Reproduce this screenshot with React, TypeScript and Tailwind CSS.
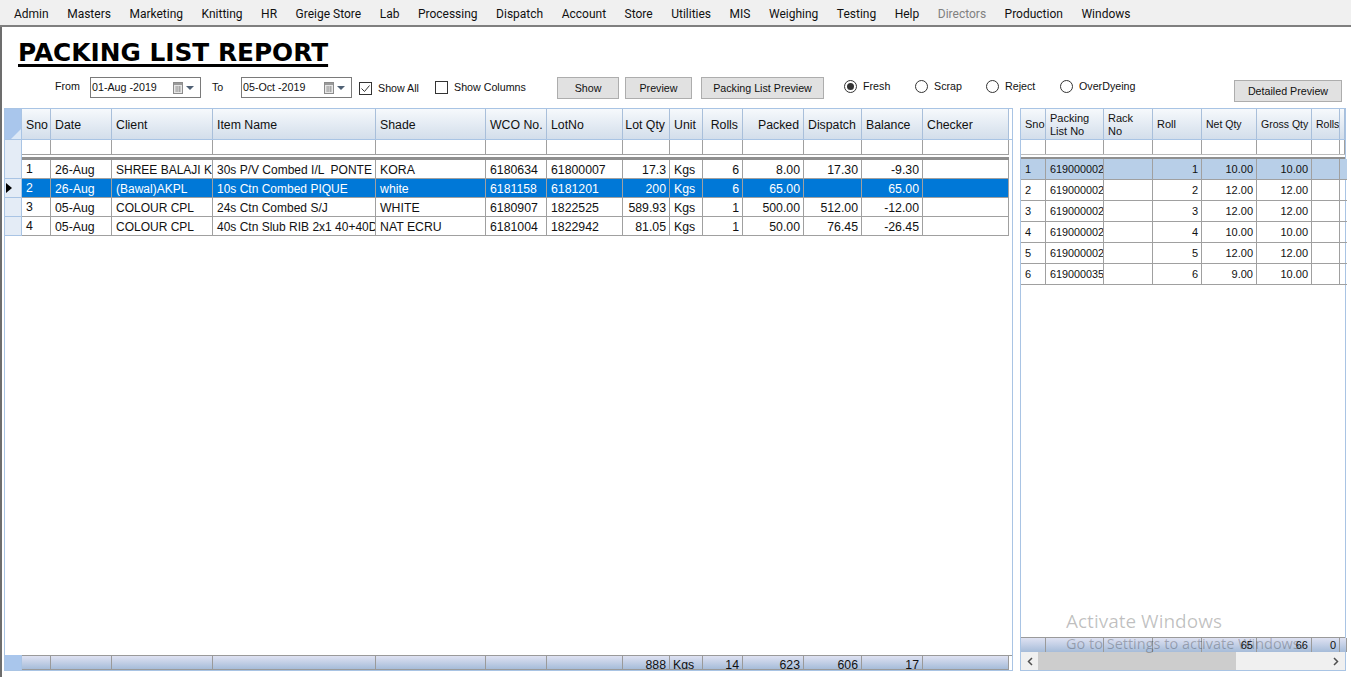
const menu = ["Admin", "Masters", "Marketing", "Knitting", "HR", "Greige Store", "Lab", "Processing", "Dispatch", "Account", "Store", "Utilities", "MIS", "Weighing", "Testing", "Help", "Directors", "Production", "Windows"];

const leftCols = "grid grid-cols-[17px_29px_61px_101px_163px_110px_61px_76px_47px_33px_40px_61px_58px_61px_86px]";
const rightCols = "grid grid-cols-[25px_58px_49px_49px_55px_55px_28px_5px]";

type Col = { label: string; right?: boolean };

const leftHead: Col[] = [
  { label: "Sno" }, { label: "Date" }, { label: "Client" }, { label: "Item Name" }, { label: "Shade" },
  { label: "WCO No." }, { label: "LotNo" }, { label: "Lot Qty", right: true }, { label: "Unit" },
  { label: "Rolls", right: true }, { label: "Packed", right: true }, { label: "Dispatch" }, { label: "Balance" }, { label: "Checker" },
];

const leftRows = [
  ["1", "26-Aug", "SHREE BALAJI KNITS", "30s P/V Combed I/L  PONTE", "KORA", "6180634", "61800007", "17.3", "Kgs", "6", "8.00", "17.30", "-9.30", ""],
  ["2", "26-Aug", "(Bawal)AKPL", "10s Ctn Combed PIQUE", "white", "6181158", "6181201", "200", "Kgs", "6", "65.00", "", "65.00", ""],
  ["3", "05-Aug", "COLOUR CPL", "24s Ctn Combed S/J", "WHITE", "6180907", "1822525", "589.93", "Kgs", "1", "500.00", "512.00", "-12.00", ""],
  ["4", "05-Aug", "COLOUR CPL", "40s Ctn Slub RIB 2x1 40+40D", "NAT ECRU", "6181004", "1822942", "81.05", "Kgs", "1", "50.00", "76.45", "-26.45", ""],
];
const leftRight = [7, 9, 10, 11, 12];

const leftFoot = ["", "", "", "", "", "", "", "888", "Kgs", "14", "623", "606", "17", ""];

const rightRows = [
  ["1", "619000002", "", "1", "10.00", "10.00", "", ""],
  ["2", "619000002", "", "2", "12.00", "12.00", "", ""],
  ["3", "619000002", "", "3", "12.00", "12.00", "", ""],
  ["4", "619000002", "", "4", "10.00", "10.00", "", ""],
  ["5", "619000002", "", "5", "12.00", "12.00", "", ""],
  ["6", "619000035", "", "6", "9.00", "10.00", "", ""],
];
const rightRight = [3, 4, 5];

function CalendarDrop() {
  return (
    <svg width="22" height="12" viewBox="0 0 22 12" className="shrink-0">
      <rect x="0.5" y="0.5" width="9" height="11" fill="#e6e6e6" stroke="#8c8c8c" />
      <rect x="1" y="1" width="8" height="2" fill="#9a9a9a" />
      <path d="M2 5h6M2 7h6M2 9h6M4 4v6M6.5 4v6" stroke="#a8a8a8" strokeWidth="1" />
      <path d="M13 4h8l-4 4z" fill="#4f6074" />
    </svg>
  );
}

function DateBox({ value }: { value: string }) {
  return (
    <div className="h-[21px] w-[111px] shrink-0 border border-[#7a7a7a] flex items-center justify-between pl-[1px] pr-[5px] text-[10.7px] text-[#111]">
      <span className="whitespace-pre">{value}</span>
      <CalendarDrop />
    </div>
  );
}

function Btn({ label, className }: { label: string; className: string }) {
  return (
    <div className={`h-[22px] shrink-0 bg-[#e1e1e1] border border-[#adadad] flex items-center justify-center text-[10.7px] text-[#111] ${className}`}>
      {label}
    </div>
  );
}

function Check({ checked }: { checked?: boolean }) {
  return (
    <svg width="13" height="13" viewBox="0 0 13 13" className="shrink-0">
      <rect x="0.5" y="0.5" width="12" height="12" fill="#fff" stroke="#333" />
      {checked && <path d="M2.5 6.5l3 3 5-6" fill="none" stroke="#333" strokeWidth="1" />}
    </svg>
  );
}

function Radio({ label, on, className }: { label: string; on?: boolean; className: string }) {
  return (
    <div className={`flex items-center shrink-0 h-[13px] mt-[3px] text-[10.7px] text-[#111] whitespace-nowrap ${className}`}>
      <svg width="13" height="13" viewBox="0 0 13 13" className="shrink-0">
        <circle cx="6.5" cy="6.5" r="6" fill="#fff" stroke="#333" />
        {on && <circle cx="6.5" cy="6.5" r="3.5" fill="#333" />}
      </svg>
      <span className="ml-[6px]">{label}</span>
    </div>
  );
}

function Corner() {
  return (
    <div className="relative bg-[#a9c6ec] border-r border-[#a9c4e4]">
      <svg width="16" height="30" viewBox="0 0 16 30" className="absolute left-0 top-0">
        <path d="M16 20v10H6z" fill="#dce8f6" />
      </svg>
    </div>
  );
}

function LeftGrid() {
  return (
    <div className="w-[1009px] h-full border border-[#a9c4e4] flex flex-col font-['Liberation_Sans',sans-serif] text-[12.3px] text-[#111]">
      <div className={`${leftCols} h-[30px] shrink-0`}>
        <Corner />
        {leftHead.map((c, i) => (
          <div key={i} className={`border-r border-[#a9bfda] bg-gradient-to-b from-[#f6f9fc] to-[#d3deeb] flex items-center px-[4px] pt-[3px] whitespace-nowrap overflow-hidden ${c.right ? "justify-end" : ""}`}>
            {c.label}
          </div>
        ))}
      </div>
      <div className={`${leftCols} h-[16px] shrink-0 border-t border-[#a9c4e4]`}>
        <div className="bg-[#e4ecf6] border-r border-[#a9c4e4]" />
        {leftHead.map((_, i) => (
          <div key={i} className="border-r border-[#a0a0a0] border-b" />
        ))}
      </div>
      <div className={`${leftCols} h-[5px] shrink-0`}>
        <div className="bg-[#e4ecf6] border-r border-[#a9c4e4]" />
        <div className="col-span-14 border-b-[3px] border-[#8f8f8f]" />
      </div>
      {leftRows.map((r, ri) => (
        <div key={ri} className={`${leftCols} h-[19px] shrink-0`}>
          <div className="bg-[#e4ecf6] border-r border-b border-[#a9c4e4] flex items-center pl-[1px]">
            {ri === 1 && <span className="w-0 h-0 border-y-[5px] border-y-transparent border-l-[6px] border-l-black" />}
          </div>
          {r.map((v, i) => (
            <div key={i} className={`border-r border-b border-[#a0a0a0] pl-[4px] pr-[3px] flex items-center whitespace-pre overflow-hidden ${i === 0 ? "" : "pt-[2px]"} ${i === 2 || i === 3 ? "text-[12px]" : ""} ${leftRight.includes(i) ? "justify-end" : ""} ${ri === 1 ? "bg-[#0078d7] text-white" : ""}`}>
              {v}
            </div>
          ))}
        </div>
      ))}
      <div className="flex-1" />
      <div className={`${leftCols} h-[15px] shrink-0 border-t border-[#9a9a9a]`}>
        <div className="bg-[#a9c6ec] border-r border-[#a9c4e4] -mt-[1px]" />
        {leftFoot.map((v, i) => (
          <div key={i} className={`border-r border-b border-[#9a9a9a] bg-gradient-to-b from-[#dfe2f2] to-[#a6bcd9] overflow-hidden whitespace-nowrap px-[3px] pt-[1px] leading-[16px] ${i === 8 ? "" : "text-right"}`}>
            {v}
          </div>
        ))}
      </div>
    </div>
  );
}

function RightHeadCell({ children, small }: { children?: React.ReactNode; small?: boolean }) {
  return (
    <div className={`border-r border-[#a9bfda] bg-gradient-to-b from-[#f6f9fc] to-[#d3deeb] flex items-center pl-[4px] pt-[1px] overflow-hidden whitespace-nowrap leading-[13px] ${small ? "text-[10.5px]" : "text-[11px]"}`}>
      {children}
    </div>
  );
}

function RightGrid() {
  return (
    <div className="w-[326px] h-full border border-[#a9c4e4] flex flex-col font-['Liberation_Sans',sans-serif] text-[11px] text-[#111]">
      <div className={`${rightCols} h-[30px] shrink-0`}>
        <RightHeadCell>Sno</RightHeadCell>
        <RightHeadCell><span>Packing<br />List No</span></RightHeadCell>
        <RightHeadCell><span>Rack<br />No</span></RightHeadCell>
        <RightHeadCell>Roll</RightHeadCell>
        <RightHeadCell small>Net Qty</RightHeadCell>
        <RightHeadCell small>Gross Qty</RightHeadCell>
        <RightHeadCell small>Rolls</RightHeadCell>
        <RightHeadCell><span className="block w-[1px] h-[10px] bg-[#e8c98a]" /></RightHeadCell>
      </div>
      <div className={`${rightCols} h-[15px] shrink-0 border-t border-[#a9c4e4]`}>
        {rightRows[0].map((_, i) => (
          <div key={i} className="border-r border-[#a0a0a0]" />
        ))}
      </div>
      <div className="h-[5px] shrink-0 border-t border-b-[2px] border-t-[#bbbbbb] border-b-[#8f8f8f]" />
      {rightRows.map((r, ri) => (
        <div key={ri} className={`${rightCols} h-[21px] shrink-0`}>
          {r.map((v, i) => (
            <div key={i} className={`border-b border-[#a0a0a0] pl-[4px] pr-[3px] pt-[1px] flex items-center whitespace-nowrap overflow-hidden ${i === 7 ? "" : "border-r"} ${i === 1 ? "pr-0 text-[10.8px]" : ""} ${rightRight.includes(i) ? "justify-end" : ""} ${ri === 0 ? "bg-[#b8cfe8]" : ""}`}>
              {v}
            </div>
          ))}
        </div>
      ))}
      <div className="flex-1" />
      <div className={`${rightCols} h-[15px] shrink-0 border-t border-[#9a9a9a]`}>
        {["", "", "", "", "65", "66", "0", ""].map((v, i) => (
          <div key={i} className="border-r border-[#9a9a9a] bg-gradient-to-b from-[#dfe2f2] to-[#a6bcd9] overflow-hidden px-[3px] text-right text-[11px] leading-[15px]">
            {v}
          </div>
        ))}
      </div>
      <div className="h-[18px] shrink-0 bg-[#f0f0f0] flex items-center">
        <div className="w-[17px] flex justify-center">
          <svg width="6" height="9" viewBox="0 0 6 9"><path d="M5 1L1.5 4.5 5 8" fill="none" stroke="#505050" strokeWidth="1.5" /></svg>
        </div>
        <div className="w-[198px] h-full bg-[#cdcdcd]" />
        <div className="flex-1 flex justify-end pr-[6px]">
          <svg width="6" height="9" viewBox="0 0 6 9"><path d="M1 1l3.5 3.5L1 8" fill="none" stroke="#505050" strokeWidth="1.5" /></svg>
        </div>
      </div>
    </div>
  );
}

export default function App() {
  return (
    <div className="relative w-[1351px] h-[677px] overflow-hidden bg-white font-['Liberation_Sans',sans-serif] flex flex-col">
      <div className="h-[27px] shrink-0 bg-[#f0f0f0] border-b-2 border-[#7f7f7f] flex items-center pl-[14px] pt-[2px] gap-[18.5px] font-['Roboto',sans-serif] text-[12px] text-[#111]">
        {menu.map((m) => (
          <span key={m} className={m === "Directors" ? "text-[#808080]" : ""}>{m}</span>
        ))}
      </div>

      <div className="flex-1 min-h-0 border-l-2 border-[#6d6d6d] flex flex-col">
        <h1 className="ml-[16px] mt-[12px] h-[38px] shrink-0 font-['DejaVu_Sans',sans-serif] font-bold text-[24.8px] leading-[28px] underline decoration-[2.5px] underline-offset-[3px] text-black">
          PACKING LIST REPORT
        </h1>

        <div className="h-[31px] shrink-0 flex items-start text-[10.7px] text-[#111] whitespace-nowrap">
          <span className="ml-[53px] mt-[1px] w-[35px] shrink-0">From</span>
          <DateBox value="01-Aug -2019" />
          <span className="ml-[11px] mt-[2px] w-[29px] shrink-0">To</span>
          <DateBox value="05-Oct -2019" />
          <div className="ml-[7px] mt-[3px] w-[76px] shrink-0 flex items-center"><Check checked /><span className="ml-[6px]">Show All</span></div>
          <div className="mt-[2px] w-[122px] shrink-0 flex items-center"><Check /><span className="ml-[6px]">Show Columns</span></div>
          <Btn label="Show" className="w-[62px]" />
          <Btn label="Preview" className="ml-[6px] w-[67px]" />
          <Btn label="Packing List Preview" className="ml-[9px] w-[123px]" />
          <Radio label="Fresh" on className="ml-[20px] w-[71px]" />
          <Radio label="Scrap" className="w-[71px]" />
          <Radio label="Reject" className="w-[74px]" />
          <Radio label="OverDyeing" className="w-[174px]" />
          <Btn label="Detailed Preview" className="mt-[3px] w-[108px]" />
        </div>

        <div className="flex-1 min-h-0 flex pl-[2px] pb-[6px] gap-[7px]">
          <LeftGrid />
          <RightGrid />
        </div>
      </div>

      <div className="absolute left-[1066px] top-[608px] font-['Open_Sans',sans-serif] text-[#000]/25 pointer-events-none">
        <div className="text-[19px] leading-[26px]">Activate Windows</div>
        <div className="text-[14.5px] leading-[20px] whitespace-nowrap">Go to Settings to activate Windows.</div>
      </div>
    </div>
  );
}
